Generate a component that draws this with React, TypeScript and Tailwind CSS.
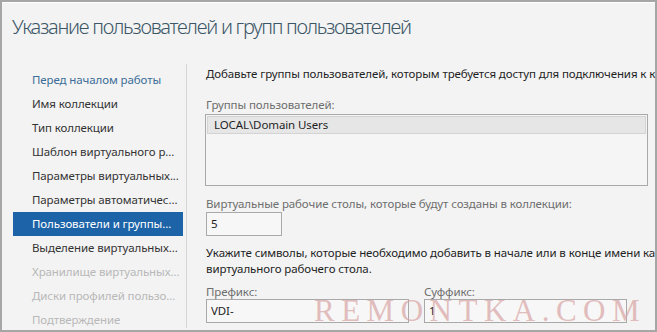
import React from 'react';

const steps = [
  { label: 'Перед началом работы', state: 'link' },
  { label: 'Имя коллекции', state: 'normal' },
  { label: 'Тип коллекции', state: 'normal' },
  { label: 'Шаблон виртуального р...', state: 'normal' },
  { label: 'Параметры виртуальных...', state: 'normal' },
  { label: 'Параметры автоматичес...', state: 'normal' },
  { label: 'Пользователи и группы...', state: 'active' },
  { label: 'Выделение виртуальных...', state: 'normal' },
  { label: 'Хранилище виртуальных...', state: 'disabled' },
  { label: 'Диски профилей пользо...', state: 'disabled' },
  { label: 'Подтверждение', state: 'disabled' },
];

function stepClass(state: string) {
  switch (state) {
    case 'link': return 'text-[#3b6d98]';
    case 'active': return 'bg-[#1d63a8] text-white';
    case 'disabled': return 'text-[#b8b8b8]';
    default: return 'text-[#333333]';
  }
}

export default function App() {
  return (
    <div
      className="relative w-[657px] h-[332px] overflow-hidden border-2 border-[#a6a6a6] bg-[#f3f3f3] text-[11.5px] tracking-[-0.1px]"
      style={{ fontFamily: '"Noto Sans", "Open Sans", sans-serif' }}
    >
      <div className="h-[62px] border-t border-white pl-[10px] pt-[10px]">
        <h1 className="text-[20px] font-light leading-[28px] tracking-[-1.25px] text-[#3b5666] whitespace-nowrap">
          Указание пользователей и групп пользователей
        </h1>
      </div>

      <div className="flex h-[264px]">
        {/* wizard steps */}
        <div className="w-[185px] shrink-0 border-r border-[#d6d6d6] pl-[11px] pr-[3px] pt-[4px]">
          {steps.map((s) => (
            <div
              key={s.label}
              className={`h-[24px] pl-[19px] leading-[24px] whitespace-nowrap overflow-hidden ${stepClass(s.state)}`}
            >
              {s.label}
            </div>
          ))}
        </div>

        {/* page content */}
        <div className="flex-1 min-w-0 pl-[18px] pt-[2px] overflow-hidden">
          <p className="leading-[16px] pl-[1px] text-[#1e1e1e] whitespace-nowrap">
            Добавьте группы пользователей, которым требуется доступ для подключения к к
          </p>

          <p className="mt-[15px] leading-[16px] pl-[1px] text-[#6e6e6e]">Группы пользователей:</p>
          <div className="mt-[1px] w-[443px] h-[72px] border border-[#a9a9a9] bg-[#f5f5f5] p-[1px]">
            <div className="h-[18px] border border-[#d3d3d3] bg-[#e6e6e6] pl-[6px] leading-[16px] text-[#1e1e1e]">
              LOCAL\Domain Users
            </div>
          </div>

          <p className="mt-[10px] leading-[16px] pl-[1px] text-[#6e6e6e] whitespace-nowrap">
            Виртуальные рабочие столы, которые будут созданы в коллекции:
          </p>
          <div className="ml-[1px] w-[76px] h-[24px] border border-[#a9a9a9] bg-[#f7f7f7] pl-[4px] leading-[22px] text-[#1e1e1e]">
            5
          </div>

          <p className="mt-[9px] leading-[16px] pl-[1px] text-[#1e1e1e] whitespace-nowrap">
            Укажите символы, которые необходимо добавить в начале или в конце имени ка
          </p>
          <p className="leading-[16px] pl-[1px] text-[#1e1e1e]">виртуального рабочего стола.</p>

          <div className="mt-[7px] flex gap-[15px] pl-[1px]">
            <div>
              <p className="leading-[15px] text-[#6e6e6e]">Префикс:</p>
              <div className="w-[203px] h-[24px] border border-[#a9a9a9] bg-[#f7f7f7] pl-[4px] leading-[22px] text-[#1e1e1e]">
                VDI-
              </div>
            </div>
            <div>
              <p className="leading-[15px] text-[#6e6e6e]">Суффикс:</p>
              <div className="w-[203px] h-[24px] border border-[#a9a9a9] bg-[#f7f7f7] pl-[4px] leading-[22px] text-[#1e1e1e]">
                1
              </div>
            </div>
          </div>
        </div>
      </div>

      {/* watermark */}
      <div
        className="pointer-events-none absolute left-[312px] top-[292px] text-[31px] leading-[34px] tracking-[6.5px] text-[#d9a4a4] opacity-70 whitespace-nowrap"
        style={{ fontFamily: '"Liberation Serif", serif' }}
      >
        REMONTKA.COM
      </div>
    </div>
  );
}
